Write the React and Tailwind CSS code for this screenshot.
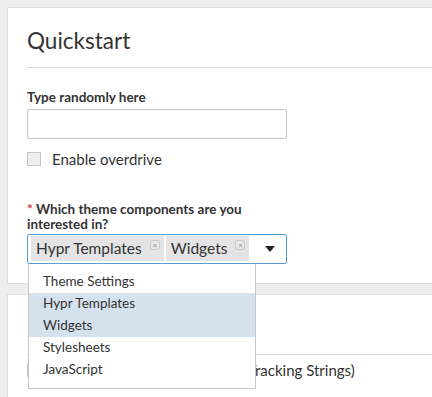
const options = ["Theme Settings", "Hypr Templates", "Widgets", "Stylesheets", "JavaScript"];
const selected = ["Hypr Templates", "Widgets"];

function Tag({ label }) {
  return (
    <span className="flex items-center h-[25px] mr-[2px] pl-[5px] pr-[4px] bg-[#e4e4e4] text-[15.5px] text-[#333]">
      {label}
      <span className="ml-[8px] -mt-[8px] flex items-center justify-center w-[10px] h-[10px] rounded-[3px] border border-[#c8c8c8] bg-[#e9e9e9] text-[8px] leading-none font-bold text-[#999]">
        ×
      </span>
    </span>
  );
}

function Checkbox({ label }) {
  return (
    <label className="flex items-center gap-[11px]">
      <span className="w-[14px] h-[14px] shrink-0 border border-[#c6c6c6] bg-[#efefef]" />
      <span className="text-[15px] text-[#333] whitespace-nowrap">{label}</span>
    </label>
  );
}

export default function App() {
  return (
    <div
      className="w-[432px] h-[397px] overflow-hidden bg-[#edeeed] pt-[7px] pl-[7px]"
      style={{ fontFamily: "Lato, 'Open Sans', sans-serif" }}
    >
      {/* Quickstart panel */}
      <div className="h-[277px] bg-white border border-r-0 border-[#dedede] pl-[19px]">
        <h2 className="h-[59px] pt-[19px] text-[22.5px] leading-[28px] text-[#333]">Quickstart</h2>
        <div className="border-t border-[#dcdcdc]" />

        <div className="pt-[21px]">
          <p className="text-[13.5px] leading-[16px] font-bold text-[#333]">Type randomly here</p>
          <input className="mt-[4px] block w-[260px] h-[30px] rounded-[2px] border border-[#c4c4c4] bg-white" />
          <div className="mt-[9px]">
            <Checkbox label="Enable overdrive" />
          </div>
        </div>

        <div className="pt-[31px]">
          <p className="text-[13.5px] leading-[15px] font-bold text-[#333]">
            <span className="text-[#d9372b]">*</span> Which theme components are you
            <br />
            interested in?
          </p>
          <div className="relative mt-[2px] w-[260px]">
            <div className="flex items-center h-[30px] pl-[3px] pr-[11px] rounded-[2px] border border-[#5b9bd5] bg-white">
              {selected.map((s) => (
                <Tag key={s} label={s} />
              ))}
              <span className="ml-auto w-0 h-0 border-l-[5px] border-r-[5px] border-t-[6px] border-l-transparent border-r-transparent border-t-[#222]" />
            </div>

            {/* open dropdown */}
            <ul className="absolute left-[1px] top-full z-10 w-[228px] py-[7px] border border-t-0 border-[#c8c8c8] bg-white">
              {options.map((o) => (
                <li
                  key={o}
                  className={`h-[22px] pl-[14px] flex items-center text-[13.5px] text-[#333] ${
                    selected.includes(o) ? "bg-[#d5e1ed]" : ""
                  }`}
                >
                  {o}
                </li>
              ))}
            </ul>
          </div>
        </div>
      </div>

      {/* second panel, mostly covered by the dropdown */}
      <div className="mt-[10px] h-[120px] bg-white border border-r-0 border-[#dedede] pl-[19px]">
        <div className="h-[59px]" />
        <div className="border-t border-[#dcdcdc]" />
        <div className="pt-[4px]">
          <Checkbox label="Add Google Analytics scripts (Tracking Strings)" />
        </div>
      </div>
    </div>
  );
}
